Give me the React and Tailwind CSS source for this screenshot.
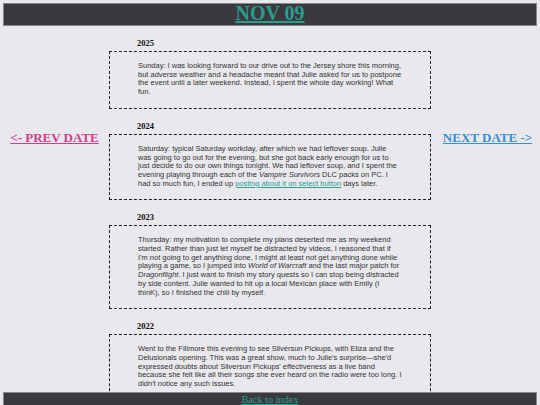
import React from "react";

const serif = { fontFamily: '"Liberation Serif", "Times New Roman", serif' };
const sans = { fontFamily: '"Liberation Sans", Arial, sans-serif' };

const Link = ({ children }) => (
  <a href="#" className="text-[#2a9d8f] underline">
    {children}
  </a>
);

const entries = [
  {
    year: "2025",
    body: (
      <>
        Sunday: I was looking forward to our drive out to the Jersey shore this morning, but adverse
        weather and a headache meant that Julie asked for us to postpone the event until a later
        weekend. Instead, I spent the whole day working! What fun.
      </>
    ),
  },
  {
    year: "2024",
    body: (
      <>
        Saturday: typical Saturday workday, after which we had leftover soup. Julie was going to go
        out for the evening, but she got back early enough for us to just decide to do our own things
        tonight. We had leftover soup, and I spent the evening playing through each of the{" "}
        <i>Vampire Survivors</i> DLC packs on PC. I had so much fun, I ended up{" "}
        <Link>posting about it on select button</Link> days later.
      </>
    ),
  },
  {
    year: "2023",
    body: (
      <>
        Thursday: my motivation to complete my plans deserted me as my weekend started. Rather than
        just let myself be distracted by videos, I reasoned that if I'm not going to get anything
        done, I might at least not get anything done while playing a game, so I jumped into{" "}
        <i>World of Warcraft</i> and the last major patch for <i>Dragonflight</i>. I just want to
        finish my story quests so I can stop being distracted by side content. Julie wanted to hit up
        a local Mexican place with Emily (I thinK), so I finished the chili by myself.
      </>
    ),
  },
  {
    year: "2022",
    body: (
      <>
        Went to the Fillmore this evening to see Silversun Pickups, with Eliza and the Delusionals
        opening. This was a great show, much to Julie's surprise—she'd expressed doubts about
        Silversun Pickups' effectiveness as a live band because she felt like all their songs she
        ever heard on the radio were too long. I didn't notice any such issues.
      </>
    ),
  },
];

function Entry({ year, body }) {
  return (
    <section className="mt-[12px]">
      <h4
        className="pl-[28px] text-[8.5px] leading-[10px] font-bold text-[#111] mb-[3px]"
        style={serif}
      >
        {year}
      </h4>
      <div className="border border-dashed border-[#1c1c1c] pl-[28px] pr-[28.4px] pt-[10px] pb-[11px]">
        <p className="text-[7.5px] leading-[8.7px] text-[#333]" style={sans}>
          {body}
        </p>
      </div>
    </section>
  );
}

export default function App() {
  return (
    <div className="min-h-screen bg-[#e9e8ed] pt-[3px]">
      <header className="mx-[3px] h-[23px] border border-[#87868b] bg-[#3a393d] flex justify-center items-start">
        <h1
          className="text-[20px] leading-[18px] font-bold text-[#2a9d8f] underline"
          style={serif}
        >
          NOV 09
        </h1>
      </header>

      <div className="grid grid-cols-[109px_322px_1fr]">
        <div className="flex justify-center pt-[104px]">
          <a
            href="#"
            className="text-[13px] leading-[15px] font-bold text-[#d0408a] underline h-fit"
            style={serif}
          >
            &lt;- PREV DATE
          </a>
        </div>

        <main className="pb-[40px]">
          {entries.map((e) => (
            <Entry key={e.year} year={e.year} body={e.body} />
          ))}
        </main>

        <div className="flex justify-center pt-[104px] pl-[4px]">
          <a
            href="#"
            className="text-[13px] leading-[15px] font-bold text-[#3a8ed2] underline h-fit"
            style={serif}
          >
            NEXT DATE -&gt;
          </a>
        </div>
      </div>

      <footer className="fixed left-[3px] right-[3px] bottom-[-4px] h-[17px] border border-[#87868b] bg-[#3a393d] flex justify-center items-start pt-[1px]">
        <a
          href="#"
          className="text-[10.3px] leading-[11px] text-[#2a9d8f] underline"
          style={serif}
        >
          Back to index
        </a>
      </footer>
    </div>
  );
}
